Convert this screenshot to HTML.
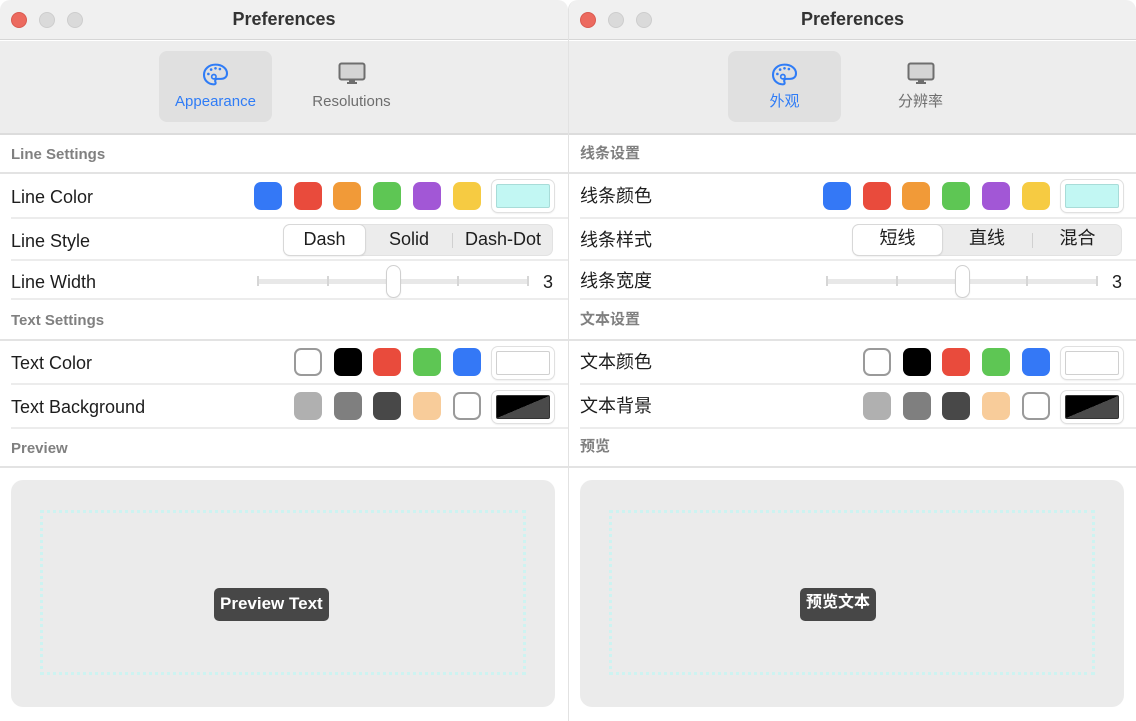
<!DOCTYPE html>
<html><head><meta charset="utf-8"><style>
*{margin:0;padding:0;box-sizing:border-box}
body{width:1136px;height:721px;background:#fff;position:relative;overflow:hidden;font-family:"Liberation Sans","Noto Sans CJK SC",sans-serif;color:#1d1d1d}
.win{position:absolute;top:0;width:568px;height:721px;background:#fff;border-radius:10px 10px 0 0;overflow:hidden;border-left:1px solid #e2e2e2}
.a{position:absolute}
.title{left:0;right:0;top:0;height:40px;background:#f0f0f0;border-bottom:1px solid #d6d6d6;text-align:center;font-weight:bold;font-size:18px;line-height:38px;color:#333}
.tl{top:12px;width:16px;height:16px;border-radius:50%;background:#dadada;border:1px solid #cdcdcd}
.tb{left:0;right:0;top:41px;height:94px;background:#ededed;border-bottom:2px solid #dcdcdc}
.tab{top:10px;height:71px;border-radius:8px;text-align:center;font-size:15px}
.hdr{left:11px;font-size:15px;font-weight:bold;color:#808080}
.lbl{left:11px;font-size:18px;color:#1d1d1d}
.cj .hdr,.cj .lbl{margin-top:-3px}
.hl{left:0;right:0;height:2px;background:#e3e3e3}
.sl{left:11px;right:0;height:2px;background:#ececec}
.sw{width:28px;height:28px;border-radius:7px}
.well{width:62px;height:32px;border-radius:6px;background:#fff;box-shadow:0 0 0 1px #e0e0e0,0 1px 2px rgba(0,0,0,.15);padding:4px}
.well div{width:100%;height:100%;border:1px solid #d0d0d0;border-radius:2px}
.seg{height:32px;background:#ececec;border-radius:7px;border:1px solid #e2e2e2;font-size:18px}
.seg span{position:absolute;top:0;height:30px;line-height:29px;text-align:center}
.cj .seg span{line-height:26px}
.segsel{background:#fff;border-radius:6px;box-shadow:0 0 0 1px #d8d8d8,0 1px 2px rgba(0,0,0,.15)}
.track{height:5px;background:#e8e8e8;border-radius:3px;top:279px}
.tick{width:2px;height:10px;background:#d6d6d6;top:276px}
.thumb{width:13px;height:31px;top:266px;background:#fff;border-radius:7px;box-shadow:0 0 0 1px #d0d0d0,0 1px 2px rgba(0,0,0,.2)}
.prev{left:11px;top:480px;width:544px;height:227px;background:#ebebeb;border-radius:12px}
.dash{left:29px;top:30px;width:486px;height:165px;border:3px dotted #cdf3f1}
.pt{background:#474747;color:#fff;font-weight:bold;font-size:17px;height:33px;line-height:32px;border-radius:5px;padding:0 6px;top:108px}
.cj .pt{line-height:30px}
</style></head><body>

<!-- LEFT -->
<div class="win" style="left:0;border-left:none">
 <div class="a title">Preferences</div>
 <div class="a tl" style="left:11px;background:#ec6a5f;border-color:#d95a50"></div>
 <div class="a tl" style="left:39px"></div>
 <div class="a tl" style="left:67px"></div>
 <div class="a tb">
  <div class="a tab" style="left:159px;width:113px;background:#e0e0e0;color:#2f7cf6">
   <svg class="a" style="left:43px;top:12px" width="27" height="23" viewBox="0 0 24 21" fill="none" stroke="#2f7cf6" stroke-width="1.9"><path d="M12 1.5C6 1.5 1.5 5.5 1.5 10.8 1.5 15.8 5.5 19.5 10.5 19.5c1.5 0 2-1 1.5-2-.8-1.5 0-3 1.8-3H17c3.5 0 5.5-2 5.5-5C22.5 5 18 1.5 12 1.5z"/><circle cx="5.5" cy="10" r="1.2" fill="#2f7cf6" stroke="none"/><circle cx="8" cy="6" r="1.2" fill="#2f7cf6" stroke="none"/><circle cx="12" cy="4.8" r="1.2" fill="#2f7cf6" stroke="none"/><circle cx="16" cy="5.5" r="1.2" fill="#2f7cf6" stroke="none"/><circle cx="10.5" cy="12.5" r="2" stroke-width="1.5"/></svg>
   <div class="a" style="left:0;right:0;top:42px">Appearance</div>
  </div>
  <div class="a tab" style="left:295px;width:113px;color:#6e6e6e">
   <svg class="a" style="left:43px;top:11px" width="28" height="23" viewBox="0 0 28 23"><rect x="1.5" y="1.5" width="25" height="16" rx="2" fill="#d4d4d4" stroke="#6e6e6e" stroke-width="2"/><rect x="11" y="18" width="6" height="3" fill="#6e6e6e"/><rect x="9" y="20" width="10" height="2" fill="#6e6e6e"/></svg>
   <div class="a" style="left:0;right:0;top:42px">Resolutions</div>
  </div>
 </div>
 <div class="a hdr" style="top:146px">Line Settings</div>
 <div class="a hl" style="top:172px"></div>
 <div class="a lbl" style="top:187px">Line Color</div>
 <div class="a sw" style="left:254px;top:182px;background:#3478f6"></div>
 <div class="a sw" style="left:294px;top:182px;background:#e94b3c"></div>
 <div class="a sw" style="left:333px;top:182px;background:#f19a38"></div>
 <div class="a sw" style="left:373px;top:182px;background:#5ec654"></div>
 <div class="a sw" style="left:413px;top:182px;background:#a257d6"></div>
 <div class="a sw" style="left:453px;top:182px;background:#f6cb42"></div>
 <div class="a well" style="left:492px;top:180px"><div style="background:#c2f7f3;border-color:#a8dcd8"></div></div>
 <div class="a sl" style="top:217px"></div>
 <div class="a lbl" style="top:231px">Line Style</div>
 <div class="a seg" style="left:283px;top:224px;width:270px">
  <span class="segsel" style="left:0;width:81px">Dash</span>
  <span style="left:81px;width:88px">Solid</span>
  <span class="a" style="left:168px;top:8px;width:1px;height:15px;background:#d0d0d0"></span>
  <span style="left:169px;width:100px">Dash-Dot</span>
 </div>
 <div class="a sl" style="top:259px"></div>
 <div class="a lbl" style="top:272px">Line Width</div>
 <div class="a track" style="left:257px;width:272px"></div>
 <div class="a tick" style="left:257px"></div><div class="a tick" style="left:327px"></div><div class="a tick" style="left:457px"></div><div class="a tick" style="left:527px"></div>
 <div class="a thumb" style="left:387px"></div>
 <div class="a" style="left:543px;top:272px;font-size:18px">3</div>
 <div class="a sl" style="top:298px"></div>
 <div class="a hdr" style="top:312px">Text Settings</div>
 <div class="a hl" style="top:339px"></div>
 <div class="a lbl" style="top:353px">Text Color</div>
 <div class="a sw" style="left:294px;top:348px;background:#fff;border:2px solid #9a9a9a"></div>
 <div class="a sw" style="left:334px;top:348px;background:#000"></div>
 <div class="a sw" style="left:373px;top:348px;background:#e94b3c"></div>
 <div class="a sw" style="left:413px;top:348px;background:#5ec654"></div>
 <div class="a sw" style="left:453px;top:348px;background:#3478f6"></div>
 <div class="a well" style="left:492px;top:347px"><div style="background:#fff"></div></div>
 <div class="a sl" style="top:383px"></div>
 <div class="a lbl" style="top:397px">Text Background</div>
 <div class="a sw" style="left:294px;top:392px;background:#b0b0b0"></div>
 <div class="a sw" style="left:334px;top:392px;background:#7f7f7f"></div>
 <div class="a sw" style="left:373px;top:392px;background:#484848"></div>
 <div class="a sw" style="left:413px;top:392px;background:#f8cc9a"></div>
 <div class="a sw" style="left:453px;top:392px;background:#fff;border:2px solid #9a9a9a"></div>
 <div class="a well" style="left:492px;top:391px"><div style="background:linear-gradient(to top left,#4a4a4a 50%,#000 50%);border-color:#333"></div></div>
 <div class="a sl" style="top:427px"></div>
 <div class="a hdr" style="top:440px">Preview</div>
 <div class="a hl" style="top:466px"></div>
 <div class="a prev"><div class="a dash"></div><div class="a pt" style="left:203px">Preview Text</div></div>
</div>

<!-- RIGHT -->
<div class="win cj" style="left:568px;width:568px">
 <div class="a title">Preferences</div>
 <div class="a tl" style="left:11px;background:#ec6a5f;border-color:#d95a50"></div>
 <div class="a tl" style="left:39px"></div>
 <div class="a tl" style="left:67px"></div>
 <div class="a tb">
  <div class="a tab" style="left:159px;width:113px;background:#e0e0e0;color:#2f7cf6">
   <svg class="a" style="left:43px;top:12px" width="27" height="23" viewBox="0 0 24 21" fill="none" stroke="#2f7cf6" stroke-width="1.9"><path d="M12 1.5C6 1.5 1.5 5.5 1.5 10.8 1.5 15.8 5.5 19.5 10.5 19.5c1.5 0 2-1 1.5-2-.8-1.5 0-3 1.8-3H17c3.5 0 5.5-2 5.5-5C22.5 5 18 1.5 12 1.5z"/><circle cx="5.5" cy="10" r="1.2" fill="#2f7cf6" stroke="none"/><circle cx="8" cy="6" r="1.2" fill="#2f7cf6" stroke="none"/><circle cx="12" cy="4.8" r="1.2" fill="#2f7cf6" stroke="none"/><circle cx="16" cy="5.5" r="1.2" fill="#2f7cf6" stroke="none"/><circle cx="10.5" cy="12.5" r="2" stroke-width="1.5"/></svg>
   <div class="a" style="left:0;right:0;top:39px">外观</div>
  </div>
  <div class="a tab" style="left:295px;width:113px;color:#6e6e6e">
   <svg class="a" style="left:43px;top:11px" width="28" height="23" viewBox="0 0 28 23"><rect x="1.5" y="1.5" width="25" height="16" rx="2" fill="#d4d4d4" stroke="#6e6e6e" stroke-width="2"/><rect x="11" y="18" width="6" height="3" fill="#6e6e6e"/><rect x="9" y="20" width="10" height="2" fill="#6e6e6e"/></svg>
   <div class="a" style="left:0;right:0;top:39px">分辨率</div>
  </div>
 </div>
 <div class="a hdr" style="top:145px">线条设置</div>
 <div class="a hl" style="top:172px"></div>
 <div class="a lbl" style="top:185px">线条颜色</div>
 <div class="a sw" style="left:254px;top:182px;background:#3478f6"></div>
 <div class="a sw" style="left:294px;top:182px;background:#e94b3c"></div>
 <div class="a sw" style="left:333px;top:182px;background:#f19a38"></div>
 <div class="a sw" style="left:373px;top:182px;background:#5ec654"></div>
 <div class="a sw" style="left:413px;top:182px;background:#a257d6"></div>
 <div class="a sw" style="left:453px;top:182px;background:#f6cb42"></div>
 <div class="a well" style="left:492px;top:180px"><div style="background:#c2f7f3;border-color:#a8dcd8"></div></div>
 <div class="a sl" style="top:217px"></div>
 <div class="a lbl" style="top:229px">线条样式</div>
 <div class="a seg" style="left:283px;top:224px;width:270px">
  <span class="segsel" style="left:0;width:89px">短线</span>
  <span style="left:89px;width:90px">直线</span>
  <span class="a" style="left:179px;top:8px;width:1px;height:15px;background:#d0d0d0"></span>
  <span style="left:180px;width:89px">混合</span>
 </div>
 <div class="a sl" style="top:259px"></div>
 <div class="a lbl" style="top:270px">线条宽度</div>
 <div class="a track" style="left:257px;width:272px"></div>
 <div class="a tick" style="left:257px"></div><div class="a tick" style="left:327px"></div><div class="a tick" style="left:457px"></div><div class="a tick" style="left:527px"></div>
 <div class="a thumb" style="left:387px"></div>
 <div class="a" style="left:543px;top:272px;font-size:18px">3</div>
 <div class="a sl" style="top:298px"></div>
 <div class="a hdr" style="top:311px">文本设置</div>
 <div class="a hl" style="top:339px"></div>
 <div class="a lbl" style="top:351px">文本颜色</div>
 <div class="a sw" style="left:294px;top:348px;background:#fff;border:2px solid #9a9a9a"></div>
 <div class="a sw" style="left:334px;top:348px;background:#000"></div>
 <div class="a sw" style="left:373px;top:348px;background:#e94b3c"></div>
 <div class="a sw" style="left:413px;top:348px;background:#5ec654"></div>
 <div class="a sw" style="left:453px;top:348px;background:#3478f6"></div>
 <div class="a well" style="left:492px;top:347px"><div style="background:#fff"></div></div>
 <div class="a sl" style="top:383px"></div>
 <div class="a lbl" style="top:395px">文本背景</div>
 <div class="a sw" style="left:294px;top:392px;background:#b0b0b0"></div>
 <div class="a sw" style="left:334px;top:392px;background:#7f7f7f"></div>
 <div class="a sw" style="left:373px;top:392px;background:#484848"></div>
 <div class="a sw" style="left:413px;top:392px;background:#f8cc9a"></div>
 <div class="a sw" style="left:453px;top:392px;background:#fff;border:2px solid #9a9a9a"></div>
 <div class="a well" style="left:492px;top:391px"><div style="background:linear-gradient(to top left,#4a4a4a 50%,#000 50%);border-color:#333"></div></div>
 <div class="a sl" style="top:427px"></div>
 <div class="a hdr" style="top:438px">预览</div>
 <div class="a hl" style="top:466px"></div>
 <div class="a prev"><div class="a dash"></div><div class="a pt" style="left:220px;font-size:16px">预览文本</div></div>
</div>
</body></html>
